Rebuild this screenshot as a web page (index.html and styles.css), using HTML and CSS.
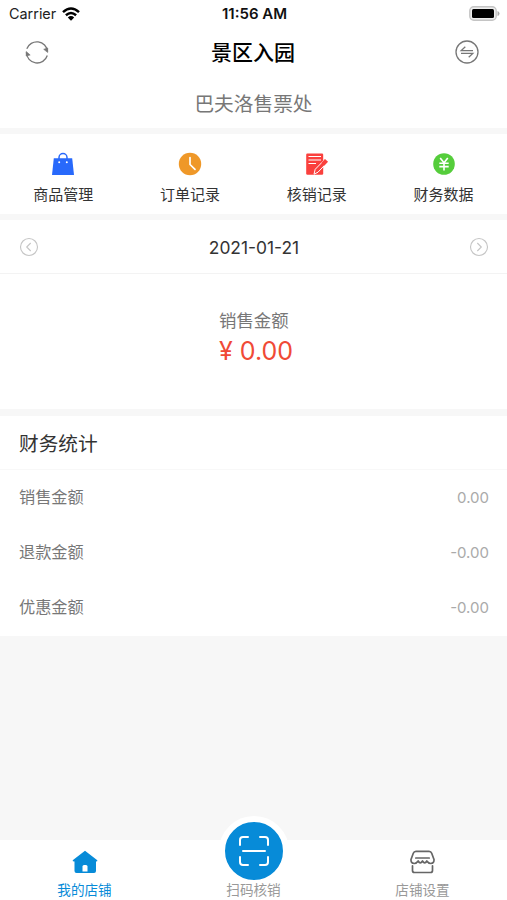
FILE: index.html
```html
<!DOCTYPE html>
<html lang="zh-CN">
<head>
    <meta charset="UTF-8">
    <meta name="viewport" content="width=device-width, initial-scale=1.0">
    <title>景区入园</title>
    <link rel="stylesheet" href="styles.css">
</head>
<body>
    <div class="status-bar">
        <div class="carrier">
            <span>Carrier</span>
            <svg width="18" height="14" viewBox="0 0 18 14" fill="none" stroke="#000" stroke-width="2.5">
                <path d="M1 5.1Q9-2.1 17 5.1"/>
                <path d="M3.9 8.2Q9 3.7 14.1 8.2"/>
                <path d="M9 13.8L5.8 10.5Q9 7.7 12.2 10.5Z" fill="#000" stroke="none"/>
            </svg>
        </div>
        <span class="time">11:56 AM</span>
        <svg class="battery" width="31" height="15" viewBox="0 0 31 15">
            <rect x=".8" y=".8" width="26.4" height="13.4" rx="4" fill="#eee" stroke="#c4c4c4" stroke-width="1.4"/>
            <rect x="3" y="3" width="22" height="9" rx="1.5" fill="#000"/>
            <path d="M28.5 5Q30.5 5.5 30.5 7.5T28.5 10Z" fill="#aaa"/>
        </svg>
    </div>

    <header class="header">
        <svg width="24" height="24" viewBox="0 0 24 24" fill="none" stroke="#777" stroke-width="1.3">
            <path d="M1.8 8.8A10.7 10.7 0 0 1 22.5 11.5"/>
            <path d="M22.3 15.5A10.7 10.7 0 0 1 1.4 12.5"/>
            <path d="M18.7 9.3L22.7 12.5V8Z" fill="#777" stroke-width=".6"/>
            <path d="M5.2 15L1.2 11.5V16Z" fill="#777" stroke-width=".6"/>
        </svg>
        <h1>景区入园</h1>
        <svg width="24" height="24" viewBox="0 0 24 24" fill="none" stroke="#777" stroke-width="1.3">
            <circle cx="12" cy="12" r="11"/>
            <path d="M18 10.6H6.2L10.3 6.7M6 13.4H17.8L13.7 17.3"/>
        </svg>
    </header>
    <div class="shop-name">巴夫洛售票处</div>

    <nav class="menu">
        <a class="menu-item">
            <svg width="24" height="24" viewBox="0 0 24 24">
                <path d="M2.8 6.3H21.2L23 23H1Z" fill="#2869fb"/>
                <path d="M8 9V5.5A4 4 0 0 1 16 5.5V9" fill="none" stroke="#2869fb" stroke-width="1.5"/>
                <circle cx="8.2" cy="10.3" r="1" fill="#fff"/>
                <circle cx="15.8" cy="10.3" r="1" fill="#fff"/>
            </svg>
            <span>商品管理</span>
        </a>
        <a class="menu-item">
            <svg width="24" height="24" viewBox="0 0 24 24">
                <circle cx="12" cy="12" r="11.2" fill="#ef9828"/>
                <path d="M12 5.5V12.5L17 17.3" fill="none" stroke="#fff" stroke-width="1.7" stroke-linecap="round"/>
            </svg>
            <span>订单记录</span>
        </a>
        <a class="menu-item">
            <svg width="24" height="24" viewBox="0 0 24 24">
                <rect x="1.2" y="1.5" width="17" height="21.3" rx="1.2" fill="#fa403d"/>
                <path d="M3.5 4.5H16M3.5 8H16M3.5 11.5H11" stroke="#fff" stroke-width="1.1"/>
                <path d="M9 22.2L10.2 17.3L20 7.3L22.8 9.8L13 20.2Z" fill="#fa403d" stroke="#fff" stroke-width="1"/>
                <path d="M16.3 11L20 7L23 9.8L19.2 13.8Z" fill="#fa403d"/>
            </svg>
            <span>核销记录</span>
        </a>
        <a class="menu-item">
            <svg width="24" height="24" viewBox="0 0 24 24">
                <circle cx="12" cy="12" r="10.8" fill="#55cd3b"/>
                <path d="M8.2 6L12 10.7L15.8 6M12 10.7V18.5M7.3 11.3H16.7M7.3 14.6H16.7" fill="none" stroke="#fff" stroke-width="1.6"/>
            </svg>
            <span>财务数据</span>
        </a>
    </nav>

    <div class="date-bar">
        <svg width="20" height="20" viewBox="0 0 20 20" fill="none" stroke="#c5c5c5" stroke-width="1.1">
            <circle cx="10" cy="10" r="8.5"/>
            <path d="M11.7 6L7.7 10L11.7 14"/>
        </svg>
        <span>2021-01-21</span>
        <svg width="20" height="20" viewBox="0 0 20 20" fill="none" stroke="#c5c5c5" stroke-width="1.1">
            <circle cx="10" cy="10" r="8.5"/>
            <path d="M8.3 6L12.3 10L8.3 14"/>
        </svg>
    </div>

    <section class="sales">
        <div class="sales-box">
            <div class="sales-label">销售金额</div>
            <div class="sales-amount"><span>¥</span>0.00</div>
        </div>
    </section>

    <section class="stats">
        <h2>财务统计</h2>
        <div class="stats-row"><span>销售金额</span><span class="value">0.00</span></div>
        <div class="stats-row"><span>退款金额</span><span class="value">-0.00</span></div>
        <div class="stats-row"><span>优惠金额</span><span class="value">-0.00</span></div>
    </section>

    <footer class="tab-bar">
        <a class="tab active">
            <svg width="26" height="24" viewBox="0 0 26 24">
                <path d="M13 .8L25.3 10.2Q25.8 11.5 24 11.5V21Q24 23 22 23H4.5Q2.5 23 2.5 21V11.5Q.2 11.5 .7 10.2Z" fill="#078bd8"/>
                <path d="M10.5 21.5V16.5Q10.5 15 12 15H14Q15.5 15 15.5 16.5V21.5Z" fill="#fff"/>
            </svg>
            <span>我的店铺</span>
        </a>
        <a class="tab scan">
            <div class="scan-button">
                <svg width="30" height="30" viewBox="0 0 30 30" fill="none" stroke="#fff" stroke-width="2" stroke-linecap="round" stroke-linejoin="round">
                    <path d="M1 9V4Q1 1 4 1H9M21 1H26Q29 1 29 4V9M29 21V26Q29 29 26 29H21M9 29H4Q1 29 1 26V21M4 15H26"/>
                </svg>
            </div>
            <span>扫码核销</span>
        </a>
        <a class="tab">
            <svg width="26" height="24" viewBox="0 0 26 24" fill="none" stroke="#666" stroke-width="1.7" stroke-linecap="round" stroke-linejoin="round">
                <path d="M6 1.3H19Q21 1.3 21.7 3.3L24 9.5Q24.3 13.3 20.8 13.5Q18.5 13.5 16.8 11Q14.8 14.6 12.5 11Q10.2 14.6 8.2 11Q6.500 13.500 4.200 13.500Q.7 13.300 1 9.500L3.300 3.300Q4 1.300 6 1.300Z"/>
                <path d="M5.800 8H19.200M2.500 15.800V20.500Q2.500 22.500 4.500 22.500H20.500Q22.500 22.500 22.500 20.500V15.800"/>
            </svg>
            <span>店铺设置</span>
        </a>
    </footer>
</body>
</html>
```
FILE: styles.css
```css
:root {
    --primary-color: #078bd8;
    --background-color: #f7f7f7;
    --text-color: #333;
    --muted-color: #777;
    --price-color: #f04a36;
}

* {
    margin: 0;
    padding: 0;
    box-sizing: border-box;
}

body {
    height: 100vh;
    display: flex;
    flex-direction: column;
    overflow: hidden;
    font-family: Inter, "Noto Sans CJK SC", sans-serif;
    background-color: var(--background-color);
    color: var(--text-color);
}

svg {
    display: block;
    flex-shrink: 0;
}

.status-bar {
    display: grid;
    grid-template-columns: 1fr auto 1fr;
    align-items: center;
    height: 27px;
    padding: 0 7px 0 9px;
    background-color: #fff;
    color: #222;
}

.carrier {
    display: flex;
    align-items: center;
    gap: 6px;
    font-size: 14.4px;
}

.time {
    font-weight: 600;
    font-size: 15px;
    color: #111;
}

.battery {
    justify-self: end;
}

.header {
    display: flex;
    align-items: center;
    justify-content: space-between;
    height: 50px;
    padding: 0 28px 0 25px;
    background-color: #fff;
}

.header h1 {
    padding: 0 0 2px 2px;
    font-size: 21px;
    font-weight: 500;
    color: #000;
}

.shop-name {
    height: 51px;
    line-height: 55px;
    background-color: #fff;
    text-align: center;
    font-size: 19.7px;
    color: var(--muted-color);
}

.menu {
    display: grid;
    grid-template-columns: repeat(4, 1fr);
    height: 80px;
    margin: 6px 0;
    background-color: #fff;
}

.menu-item {
    display: flex;
    flex-direction: column;
    align-items: center;
    gap: 8px;
    padding-top: 18px;
    font-size: 15px;
    line-height: 22px;
}

.date-bar {
    display: flex;
    align-items: center;
    justify-content: space-between;
    height: 54px;
    padding: 1px 18px 0 19px;
    background-color: #fff;
    border-bottom: 1px solid #f3f3f3;
    font-size: 17.4px;
}

.sales {
    display: flex;
    justify-content: center;
    height: 135px;
    padding: 34px 0 0 5px;
    background-color: #fff;
}

.sales-label {
    font-size: 17.4px;
    line-height: 26px;
    color: var(--muted-color);
}

.sales-amount {
    display: flex;
    gap: 7px;
    font-size: 25px;
    line-height: 34px;
    color: var(--price-color);
}

.stats {
    margin-top: 7px;
    padding-bottom: 1px;
    background-color: #fff;
}

.stats h2 {
    height: 54px;
    padding-left: 19px;
    border-bottom: 1px solid #f8f8f8;
    font-size: 19.7px;
    font-weight: 400;
    line-height: 56px;
}

.stats-row {
    display: flex;
    align-items: center;
    justify-content: space-between;
    height: 55px;
    padding: 0 18px 0 19px;
    font-size: 16.2px;
    line-height: 23px;
    color: var(--muted-color);
}

.stats-row .value {
    font-size: 15px;
    color: #aaa;
}

.tab-bar {
    display: grid;
    grid-template-columns: repeat(3, 1fr);
    grid-template-rows: 60px;
    height: 60px;
    margin-top: auto;
    background-color: #fff;
}

.tab {
    display: flex;
    flex-direction: column;
    align-items: center;
    justify-content: flex-end;
    gap: 6px;
    font-size: 13.6px;
    line-height: 20px;
    color: #999;
}

.tab.active {
    color: var(--primary-color);
}

.tab.scan {
    gap: 0;
}

.scan-button {
    display: flex;
    align-items: center;
    justify-content: center;
    flex-shrink: 0;
    width: 70px;
    height: 70px;
    margin-bottom: -6px;
    background-color: var(--primary-color);
    border: 6.5px solid #fff;
    border-radius: 50%;
}

.scan span {
    position: relative;
}
```
